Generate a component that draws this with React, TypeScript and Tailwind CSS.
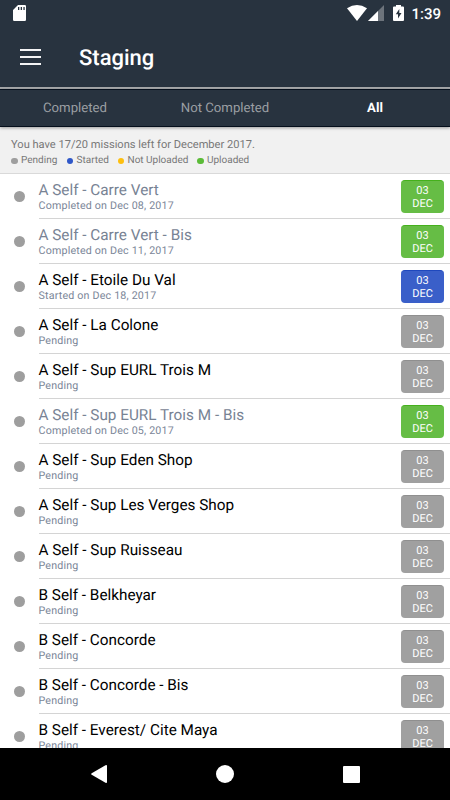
type Status = 'pending' | 'started' | 'uploaded'

interface Mission { name: string, detail: string, status: Status }

const missions: Mission[] = [
  { name: 'A Self - Carre Vert', detail: 'Completed on Dec 08, 2017', status: 'uploaded' },
  { name: 'A Self - Carre Vert - Bis', detail: 'Completed on Dec 11, 2017', status: 'uploaded' },
  { name: 'A Self - Etoile Du Val', detail: 'Started on Dec 18, 2017', status: 'started' },
  { name: 'A Self - La Colone', detail: 'Pending', status: 'pending' },
  { name: 'A Self - Sup EURL Trois M', detail: 'Pending', status: 'pending' },
  { name: 'A Self - Sup EURL Trois M - Bis', detail: 'Completed on Dec 05, 2017', status: 'uploaded' },
  { name: 'A Self - Sup Eden Shop', detail: 'Pending', status: 'pending' },
  { name: 'A Self - Sup Les Verges Shop', detail: 'Pending', status: 'pending' },
  { name: 'A Self - Sup Ruisseau', detail: 'Pending', status: 'pending' },
  { name: 'B Self - Belkheyar', detail: 'Pending', status: 'pending' },
  { name: 'B Self - Concorde', detail: 'Pending', status: 'pending' },
  { name: 'B Self - Concorde - Bis', detail: 'Pending', status: 'pending' },
  { name: 'B Self - Everest/ Cite Maya', detail: 'Pending', status: 'pending' },
]

const badgeColors: Record<Status, string> = {
  pending: 'bg-[#a0a0a0] border-t-[#8f8f8f]',
  started: 'bg-[#3a5fc9] border-t-[#1f48bd]',
  uploaded: 'bg-[#66bd45] border-t-[#45b01c]',
}

const legend = [
  { label: 'Pending', color: 'bg-[#9e9e9e]', width: 'w-[55.500px]' },
  { label: 'Started', color: 'bg-[#2f57c8]', width: 'w-[51px]' },
  { label: 'Not Uploaded', color: 'bg-[#fdbf0f]', width: 'w-[79.500px]' },
  { label: 'Uploaded', color: 'bg-[#5bbb38]', width: 'w-[60px]' },
]

function StatusBar() {
  return (
    <div className="flex h-7 shrink-0 items-start pl-[13px] pr-[7px] text-white">
      <svg className="mt-[5px]" width="13" height="16" viewBox="0 0 13 16">
        <path fill="currentColor" fillRule="evenodd" d="M5 0h6.8Q13 0 13 1.2v13.6q0 1.2-1.2 1.2H1.2Q0 16 0 14.800V5zM5 2v3h1.300V2zM7.700 2v3H9V2zM10.400 2v3h1.300V2z" />
      </svg>
      <div className="ml-auto flex items-start">
        <svg className="mt-[5px]" width="20" height="16" viewBox="0 0 20 16">
          <path fill="currentColor" d="M0 3.300Q10-3.300 20 3.300L10 16z" />
        </svg>
        <svg className="ml-[1px] mt-[5px]" width="16" height="16" viewBox="0 0 16 16">
          <path fill="currentColor" fillOpacity=".32" d="M16 0v16H0z" />
          <path fill="currentColor" d="M10 6v10H0z" />
        </svg>
        <svg className="ml-[9px] mt-[5px]" width="11" height="16" viewBox="0 0 11 16">
          <path fill="currentColor" fillRule="evenodd" d="M3 0h5v1.500h2q1 0 1 1V15q0 1-1 1H1q-1 0-1-1V2.500q0-1 1-1h2zM6.300 4L2.800 9.200H5V13.500l3.500-5.500H6.300z" />
        </svg>
        <span className="ml-[7.500px] mt-[4px] w-[31.500px] whitespace-nowrap text-[15px] font-medium leading-[21px]">1:39</span>
      </div>
    </div>
  )
}

function MissionRow({ mission }: { mission: Mission }) {
  const done = mission.status === 'uploaded'
  return (
    <li className="flex h-[45px] shrink-0">
      <div className="w-[38.500px] shrink-0 pl-[13.500px] pt-[17px]">
        <div className="size-[11px] rounded-full bg-[#9e9e9e]" />
      </div>
      <div className="flex flex-1 border-b border-[#d4d4d4]">
        <div className="flex-1 pt-[6px]">
          <div className={`text-[15.300px] leading-[20px] ${done ? 'text-[#788394]' : 'text-black'}`}>{mission.name}</div>
          <div className="text-[10.700px] leading-[12px] tracking-[0.180px] text-[#7b8698]">{mission.detail}</div>
        </div>
        <div className={`mr-[6px] mt-[6px] h-[33px] w-[43px] rounded-[4px] border-t pt-[3px] text-center text-[11px] leading-[13px] text-white ${badgeColors[mission.status]}`}>
          <div>03</div>
          <div>DEC</div>
        </div>
      </div>
    </li>
  )
}

export default function App() {
  return (
    <div className="flex h-[800px] w-[450px] flex-col overflow-hidden bg-white font-[Roboto,sans-serif] [text-rendering:geometricPrecision]">
      <header className="flex h-[89px] shrink-0 flex-col border-b-2 border-[#a6a8aa] bg-[#28333f] text-white">
        <StatusBar />
        <div className="flex h-[59px] items-center pl-[20px]">
          <div className="mb-[2px] flex w-[21px] flex-col gap-[5px]">
            <div className="h-[2px] bg-[#f4f4f5]" />
            <div className="h-[2px] bg-[#f4f4f5]" />
            <div className="h-[2px] bg-[#f4f4f5]" />
          </div>
          <h1 className="ml-[38px] mt-[2px] text-[22px] font-medium leading-7">Staging</h1>
        </div>
      </header>

      <nav className="z-10 grid h-[38px] shrink-0 grid-cols-3 border-y border-[#050f1c] bg-[#28333f] text-center text-[13.200px] leading-[38px] text-[#9b9fa3] shadow-[0_1px_3px_rgba(0,0,0,0.35)]">
        <div>Completed</div>
        <div>Not Completed</div>
        <div className="font-bold text-white">All</div>
      </nav>

      <section className="h-[47px] shrink-0 border-b border-[#d9d9d9] bg-[#f1f1f1] pl-[11px] pt-[9px] text-[#777777]">
        <p className="text-[11.100px] leading-[17px]">You have 17/20 missions left for December 2017.</p>
        <div className="flex text-[10px] leading-[16px]">
          {legend.map(item => (
            <div key={item.label} className={`flex shrink-0 items-center whitespace-nowrap ${item.width}`}>
              <span className={`mr-[3.500px] size-[6.500px] shrink-0 rounded-full ${item.color}`} />
              {item.label}
            </div>
          ))}
        </div>
      </section>

      <ul className="flex min-h-0 flex-1 flex-col overflow-hidden">
        {missions.map(m => <MissionRow key={m.name} mission={m} />)}
      </ul>

      <footer className="flex h-[52px] shrink-0 items-center bg-black text-white">
        <svg className="ml-[91px]" width="16" height="18" viewBox="0 0 16 18">
          <path fill="currentColor" d="M14.500.3Q16-.4 16 1v16q0 1.400-1.500.7L.7 9.800Q-.4 9 .7 8.200z" />
        </svg>
        <div className="ml-[109px] size-[18px] rounded-full bg-white" />
        <div className="ml-[109px] size-[17px] rounded-[1px] bg-white" />
      </footer>
    </div>
  )
}
